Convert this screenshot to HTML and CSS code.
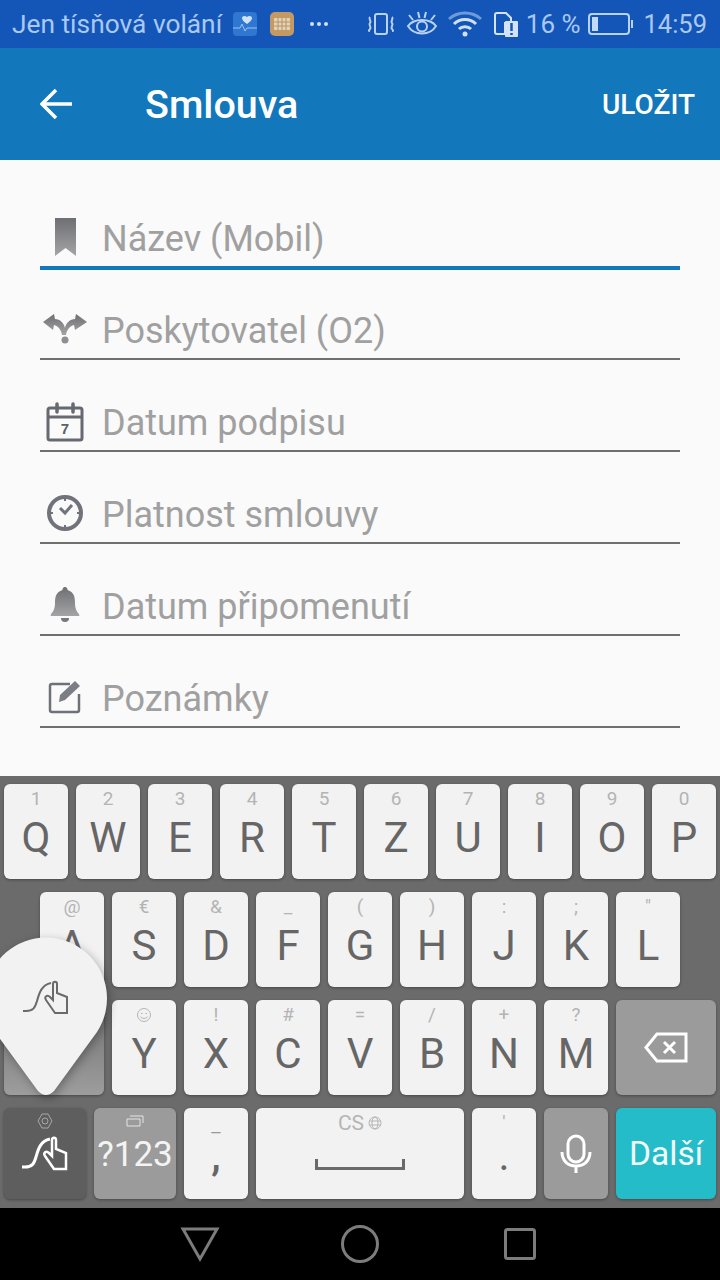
FILE: index.html
```html
<!DOCTYPE html>
<html lang="cs">

<head>
      <meta charset="UTF-8">
      <meta name="viewport" content="width=device-width, initial-scale=1.0">
      <title>Smlouva</title>
      <link rel="stylesheet" href="styles.css">
</head>

<body>
      <div class="phone">
            <!-- status bar -->
            <div class="status">
                  <div class="statusGroup">
                        <span class="statusText wideText">Jen tísňová volání</span>
                        <svg class="appIcon" width="24" height="24" viewBox="0 0 24 24">
                              <rect width="24" height="24" rx="4" fill="#2f77d0" />
                              <path d="M14 12c-2-1.500-5-3.500-5-6 0-2 3-3 5-1 2-2 5-1 5 1 0 2.500-3 4.500-5 6z" fill="#cfe2f8" />
                              <path d="M0 16h7l2-4 3 7 2-3h10" fill="none" stroke="#9cc3f0" stroke-width="1" />
                        </svg>
                        <svg class="appIcon second" width="24" height="24" viewBox="0 0 24 24">
                              <rect width="24" height="24" rx="5" fill="#c49a62" />
                              <rect x="4" y="6" width="16" height="12" rx="1" fill="#e3d3b8" />
                              <path d="M4 10h16M4 14h16M8 6v12M12 6v12M16 6v12" stroke="#b7945f" stroke-width="1" />
                        </svg>
                        <svg class="dots" width="18" height="6" viewBox="0 0 18 6">
                              <circle cx="2" cy="3" r="2" fill="#cfe0f7" />
                              <circle cx="9" cy="3" r="2" fill="#cfe0f7" />
                              <circle cx="16" cy="3" r="2" fill="#cfe0f7" />
                        </svg>
                  </div>
                  <div class="statusGroup">
                        <svg width="28" height="24" viewBox="0 0 28 24" fill="none" stroke="#b9d2f4" stroke-width="2">
                              <rect x="8" y="2" width="12" height="20" rx="2" />
                              <path d="M3 5C1 7 5 9 3 11s2 4 0 6-1 2 0 2M25 5c2 2-2 4 0 6s-2 4 0 6 1 2 0 2" />
                        </svg>
                        <svg class="eye" width="32" height="26" viewBox="0 0 32 26" fill="none" stroke="#b9d2f4" stroke-width="2">
                              <path d="M2 15C8 7 24 7 30 15 24 25 8 25 2 15z" />
                              <circle cx="16" cy="15.500" r="5" />
                              <path d="M3 4l4 5M12 1l1.500 6M20 1l-1.500 6M29 4l-4 5" />
                        </svg>
                        <svg class="wifi" width="34" height="26" viewBox="0 0 34 26" fill="none" stroke="#cfe0f7" stroke-width="3">
                              <path d="M1 8c9-8 23-8 32 0" stroke="#6f9ad8" />
                              <path d="M6 13c6-6 16-6 22 0M11 18c3-3 9-3 12 0" />
                              <circle cx="17" cy="23" r="2.500" fill="#cfe0f7" stroke="none" />
                        </svg>
                        <svg class="sim" width="24" height="25" viewBox="0 0 24 25">
                              <path d="M1 3a2 2 0 0 1 2-2h9l5 5v5h-6v11H3a2 2 0 0 1-2-2z" fill="none" stroke="#d5e3f8" stroke-width="2" />
                              <rect x="11" y="9" width="13" height="16" rx="1" fill="#d5e3f8" />
                              <path d="M17.500 11v8M17.500 21v2" stroke="#1456b8" stroke-width="2.500" />
                        </svg>
                        <span class="statusText percent">16 %</span>
                        <svg class="battery" width="45" height="24" viewBox="0 0 45 24">
                              <rect x="1" y="2" width="40" height="20" rx="3" fill="none" stroke="#b9d2f4" stroke-width="2" />
                              <rect x="4" y="5" width="6" height="14" fill="#c4d9f6" />
                              <rect x="43" y="8" width="2" height="8" fill="#b9d2f4" />
                        </svg>
                        <span class="statusText time">14:59</span>
                  </div>
            </div>

            <!-- app bar -->
            <div class="appBar">
                  <svg class="backIcon" width="32" height="32" viewBox="0 0 32 32" fill="none" stroke="#fff" stroke-width="3.500">
                        <path d="M32 16H3M16 2L2 16l14 14" />
                  </svg>
                  <span class="appTitle">Smlouva</span>
                  <span class="saveBtn">ULOŽIT</span>
            </div>

            <!-- form -->
            <div class="form">
                  <div class="field active">
                        <svg class="fieldIcon" width="46" height="46" viewBox="0 0 46 46">
                              <defs>
                                    <linearGradient id="iconFade" x1="0" y1="0" x2="0" y2="1">
                                          <stop offset="0" stop-color="#6e6f73" />
                                          <stop offset="1" stop-color="#a4a4a6" />
                                    </linearGradient>
                              </defs>
                              <path d="M13 4h21v38L23.500 34 13 42z" fill="url(#iconFade)" />
                        </svg>
                        <span class="fieldText">Název (Mobil)</span>
                  </div>
                  <div class="field">
                        <svg class="fieldIcon" width="46" height="46" viewBox="0 0 46 46">
                              <path d="M1 16L12 8l1 5c5 0 9 4 10 9 1-5 5-9 10-9l1-5 11 8-12 8-1-5c-4 1-7.500 5-8 10h-4c-.5-5-4-9-8-10l-1 5z" fill="url(#iconFade)" />
                              <circle cx="23" cy="34" r="3.500" fill="#8d8f94" />
                        </svg>
                        <span class="fieldText">Poskytovatel (O2)</span>
                  </div>
                  <div class="field">
                        <svg class="fieldIcon" width="46" height="46" viewBox="0 0 46 46" fill="none">
                              <path d="M8 10h30a2 2 0 0 1 2 2v28a2 2 0 0 1-2 2H8a2 2 0 0 1-2-2V12a2 2 0 0 1 2-2z" stroke="#666970" stroke-width="3" />
                              <path d="M6 19h34" stroke="#666970" stroke-width="3" />
                              <path d="M15 6v8M31 6v8" stroke="#666970" stroke-width="3.500" stroke-linecap="round" />
                              <text class="calDay" x="23" y="36" text-anchor="middle">7</text>
                        </svg>
                        <span class="fieldText">Datum podpisu</span>
                  </div>
                  <div class="field">
                        <svg class="fieldIcon" width="46" height="46" viewBox="0 0 46 46" fill="none" stroke="#70737a">
                              <circle cx="23" cy="23" r="16" stroke-width="4" />
                              <path d="M18 18l5 5 7-8" stroke-width="3" />
                              <path d="M23 9v2M23 35v2M9 23h2M35 23h2" stroke-width="2" />
                        </svg>
                        <span class="fieldText">Platnost smlouvy</span>
                  </div>
                  <div class="field">
                        <svg class="fieldIcon" width="46" height="46" viewBox="0 0 46 46">
                              <path d="M23 5a2.500 2.500 0 0 1 2.500 3C32 10 33 15 33 21c0 6 2 9 4 11 1 2 0 2-1 2H10c-1 0-2 0-1-2 2-2 4-5 4-11 0-6 1-11 7.500-13A2.500 2.500 0 0 1 23 5z" fill="url(#iconFade)" />
                              <path d="M19 36h8a4 4 0 0 1-8 0z" fill="#77787c" />
                        </svg>
                        <span class="fieldText">Datum připomenutí</span>
                  </div>
                  <div class="field">
                        <svg class="fieldIcon" width="46" height="46" viewBox="0 0 46 46" fill="none">
                              <path d="M28 10H10a2 2 0 0 0-2 2v24a2 2 0 0 0 2 2h25a2 2 0 0 0 2-2V20" stroke="#6e7178" stroke-width="2.500" />
                              <path d="M18 21L33 7l5 5-15 14-6 2z" fill="#7b7e85" />
                        </svg>
                        <span class="fieldText">Poznámky</span>
                  </div>
            </div>

            <!-- keyboard -->
            <div class="keyboard">
                  <div class="row">
                        <div class="key"><span class="hint">1</span><span class="cap">Q</span></div>
                        <div class="key"><span class="hint">2</span><span class="cap">W</span></div>
                        <div class="key"><span class="hint">3</span><span class="cap">E</span></div>
                        <div class="key"><span class="hint">4</span><span class="cap">R</span></div>
                        <div class="key"><span class="hint">5</span><span class="cap">T</span></div>
                        <div class="key"><span class="hint">6</span><span class="cap">Z</span></div>
                        <div class="key"><span class="hint">7</span><span class="cap">U</span></div>
                        <div class="key"><span class="hint">8</span><span class="cap">I</span></div>
                        <div class="key"><span class="hint">9</span><span class="cap">O</span></div>
                        <div class="key"><span class="hint">0</span><span class="cap">P</span></div>
                  </div>
                  <div class="row rowIndent">
                        <div class="key"><span class="hint">@</span><span class="cap">A</span></div>
                        <div class="key"><span class="hint">€</span><span class="cap">S</span></div>
                        <div class="key"><span class="hint">&amp;</span><span class="cap">D</span></div>
                        <div class="key"><span class="hint">_</span><span class="cap">F</span></div>
                        <div class="key"><span class="hint">(</span><span class="cap">G</span></div>
                        <div class="key"><span class="hint">)</span><span class="cap">H</span></div>
                        <div class="key"><span class="hint">:</span><span class="cap">J</span></div>
                        <div class="key"><span class="hint">;</span><span class="cap">K</span></div>
                        <div class="key"><span class="hint">"</span><span class="cap">L</span></div>
                  </div>
                  <div class="row">
                        <div class="key wide shift"></div>
                        <div class="key">
                              <svg class="smiley" width="14" height="14" viewBox="0 0 14 14" fill="none" stroke="#b4b4b4" stroke-width="1">
                                    <circle cx="7" cy="7" r="6.500" />
                                    <circle cx="4.800" cy="5.500" r="0.800" fill="#b4b4b4" stroke="none" />
                                    <circle cx="9.200" cy="5.500" r="0.800" fill="#b4b4b4" stroke="none" />
                                    <path d="M3.500 8.500c1 2.500 6 2.500 7 0" />
                              </svg>
                              <span class="cap">Y</span>
                        </div>
                        <div class="key"><span class="hint">!</span><span class="cap">X</span></div>
                        <div class="key"><span class="hint">#</span><span class="cap">C</span></div>
                        <div class="key"><span class="hint">=</span><span class="cap">V</span></div>
                        <div class="key"><span class="hint">/</span><span class="cap">B</span></div>
                        <div class="key"><span class="hint">+</span><span class="cap">N</span></div>
                        <div class="key"><span class="hint">?</span><span class="cap">M</span></div>
                        <div class="key wide func center">
                              <svg width="44" height="32" viewBox="0 0 44 32" fill="none" stroke="#fff" stroke-width="3">
                                    <path d="M13 2h29v27H13L2 15.500z" />
                                    <path d="M20 10l11 11M31 10L20 21" />
                              </svg>
                        </div>
                  </div>
                  <div class="row rowLast">
                        <div class="key swipe">
                              <svg class="gearIcon" width="16" height="16" viewBox="0 0 16 16" fill="none" stroke="#a8a8a8" stroke-width="1">
                                    <path d="M5 1h6l4 7-4 7H5L1 8z" />
                                    <circle cx="8" cy="8" r="3" />
                              </svg>
                              <svg class="swipeIcon" width="48" height="36" viewBox="0 0 48 36" fill="none" stroke="#fff" stroke-width="3">
                                    <path d="M1 31h3c7 0 9-3 11-10S19 5 29 3" />
                                    <path d="M33 33L24 20c-2-3 1-6 4-3l3 3V4c0-3 4-3 4 0v9l10 4v16z" stroke-width="2.500" />
                              </svg>
                        </div>
                        <div class="key func sym">
                              <svg class="tabIcon" width="18" height="12" viewBox="0 0 18 12" fill="none" stroke="#e4e4e4" stroke-width="1">
                                    <path d="M1 4h13v7H1zM4 1h13v7" />
                              </svg>
                              <span class="symText">?123</span>
                        </div>
                        <div class="key"><span class="hint dash">–</span><span class="cap comma">,</span></div>
                        <div class="key space">
                              <span class="spaceLang">CS
                                    <svg width="14" height="14" viewBox="0 0 14 14" fill="none" stroke="#b5b5b5" stroke-width="1">
                                          <circle cx="7" cy="7" r="6" />
                                          <ellipse cx="7" cy="7" rx="3" ry="6" />
                                          <path d="M1 5h12M1 9h12" />
                                    </svg>
                              </span>
                              <svg class="spaceBar" width="90" height="11" viewBox="0 0 90 11" fill="none" stroke="#6a6a6a" stroke-width="3">
                                    <path d="M1.500 0v9.500h87V0" />
                              </svg>
                        </div>
                        <div class="key"><span class="hint">'</span><span class="cap dot">.</span></div>
                        <div class="key func center">
                              <svg class="micIcon" width="32" height="40" viewBox="0 0 32 40" fill="none" stroke="#fff" stroke-width="3">
                                    <rect x="8" y="2" width="16" height="26" rx="8" />
                                    <path d="M2 18c0 9 6 14 14 14s14-5 14-14M16 32v7" />
                              </svg>
                        </div>
                        <div class="key wide go center"><span class="goText">Další</span></div>
                  </div>

                  <!-- swipe popup lies over the keys -->
                  <svg class="pin" width="112" height="164" viewBox="0 0 112 164">
                        <path d="M-5 96A61 61 0 1 1 97 96L54 155Q46 163 38 155Z" fill="#f2f2f2" />
                        <g transform="translate(22 44)" fill="none" stroke="#6a6a6a" stroke-width="2">
                              <path d="M1 31h3c7 0 9-3 11-10S19 5 29 3" />
                              <path d="M33 33L24 20c-2-3 1-6 4-3l3 3V4c0-3 4-3 4 0v9l10 4v16z" />
                        </g>
                  </svg>
            </div>

            <!-- navigation bar -->
            <div class="navBar">
                  <svg width="40" height="40" viewBox="0 0 40 40" fill="none" stroke="#7c7c7c" stroke-width="3">
                        <path d="M3 5h34L20 35z" />
                  </svg>
                  <svg width="40" height="40" viewBox="0 0 40 40" fill="none" stroke="#7c7c7c" stroke-width="3">
                        <circle cx="20" cy="20" r="17.500" />
                  </svg>
                  <svg width="40" height="40" viewBox="0 0 40 40" fill="none" stroke="#7c7c7c" stroke-width="3">
                        <rect x="5.500" y="5.500" width="29" height="29" rx="2" />
                  </svg>
            </div>
      </div>
</body>

</html>
```

FILE: styles.css
```css
/* page */
body {
      margin: 0;
      font-family: Roboto, "Noto Sans", sans-serif;
}

.phone {
      display: flex;
      flex-direction: column;
      width: 720px;
      height: 1280px;
      overflow: hidden;
}

/* status bar */
.status {
      display: flex;
      flex: 0 0 48px;
      align-items: center;
      justify-content: space-between;
      padding: 0 13px 0 12px;
      background-color: #1456b8;
}

.statusGroup {
      display: flex;
      align-items: center;
}

.statusText {
      color: #a9c9f3;
      font-size: 26px;
      line-height: 48px;
}

.statusText.wideText {
      font-size: 26.300px;
}

.appIcon {
      margin-left: 11px;
}

.appIcon.second {
      margin-left: 13px;
}

.dots {
      margin-left: 16px;
}

.eye {
      margin-left: 11px;
}

.wifi {
      margin-left: 10px;
}

.sim {
      margin-left: 12px;
}

.percent {
      margin-left: 8px;
}

.battery {
      margin-left: 8px;
}

.statusText.time {
      margin-left: 10px;
      font-size: 25.500px;
}

/* app bar */
.appBar {
      display: flex;
      flex: 0 0 112px;
      align-items: center;
      padding: 0 25px 0 40px;
      background-color: #1277bb;
}

.appTitle {
      margin-left: 73px;
      color: #fff;
      font-size: 39.500px;
      font-weight: 500;
}

.saveBtn {
      margin-left: auto;
      color: #fff;
      font-size: 28px;
      font-weight: 500;
}

/* form */
.form {
      flex: 1;
      padding: 16px 40px 0;
      background-color: #fafafa;
}

.field {
      display: flex;
      box-sizing: border-box;
      align-items: flex-end;
      height: 92px;
      padding: 0 0 4px 2px;
      border-bottom: 2px solid #6f6f6f;
}

.field.active {
      border-bottom-color: #1277bb;
      box-shadow: 0 2px 0 #1277bb;
}

.fieldIcon {
      flex: 0 0 46px;
      margin-bottom: 2px;
}

.fieldText {
      margin-left: 14px;
      color: #a0a0a0;
      font-size: 36px;
      line-height: 46px;
}

.calDay {
      fill: #5c6068;
      font-size: 15px;
      font-weight: 700;
      font-family: "Liberation Sans", sans-serif;
}

/* keyboard */
.keyboard {
      position: relative;
      display: flex;
      flex-direction: column;
      gap: 13px;
      padding: 8px 4px 9px;
      background-color: #6b6b6b;
}

.row {
      display: flex;
      gap: 8px;
      height: 95px;
}

.rowIndent {
      padding-left: 36px;
}

.rowLast {
      height: 91px;
}

.key {
      display: flex;
      box-sizing: border-box;
      flex: 0 0 64px;
      flex-direction: column;
      align-items: center;
      padding-top: 5px;
      border-radius: 6px;
      background-color: #f2f2f2;
      box-shadow: 0 1px 3px rgba(0, 0, 0, 0.35);
}

.key.wide {
      flex-basis: 100px;
}

.key.center {
      justify-content: center;
      padding-top: 0;
}

.hint {
      height: 20px;
      color: #b4b4b4;
      font-size: 19px;
      line-height: 20px;
}

.smiley {
      margin: 3px 0;
}

.cap {
      margin-top: 3px;
      color: #666;
      font-size: 42px;
      line-height: 52px;
}

.hint.dash {
      margin-top: 10px;
      color: #999;
}

.cap.comma {
      margin-top: 0;
      font-weight: 500;
      line-height: 26px;
}

.cap.dot {
      margin-top: 10px;
      line-height: 26px;
}

.shift {
      background: linear-gradient(#707070, #9d9d9d);
}

.func {
      background-color: #9b9b9b;
}

.swipe {
      flex-basis: 82px;
      background-color: #5e5e5e;
}

.gearIcon {
      margin-bottom: 7px;
}

.sym {
      flex-basis: 82px;
}

.tabIcon {
      margin: 2px 0 6px;
}

.symText {
      color: #f4f4f4;
      font-size: 35px;
      line-height: 44px;
}

.space {
      flex-basis: 208px;
}

.spaceLang {
      display: flex;
      align-items: center;
      gap: 4px;
      color: #b5b5b5;
      font-size: 21px;
      line-height: 20px;
}

.spaceBar {
      margin-top: 26px;
}

.go {
      background-color: #24bcc8;
}

.goText {
      color: #f2fbfc;
      font-size: 33.500px;
}

/* popup over the first keys */
.pin {
      position: absolute;
      top: 160px;
      left: 0;
      overflow: visible;
      filter: drop-shadow(2px 3px 5px rgba(0, 0, 0, 0.3));
}

/* navigation bar */
.navBar {
      display: flex;
      flex: 0 0 72px;
      align-items: center;
      justify-content: center;
      gap: 120px;
      background-color: #000;
}
```
